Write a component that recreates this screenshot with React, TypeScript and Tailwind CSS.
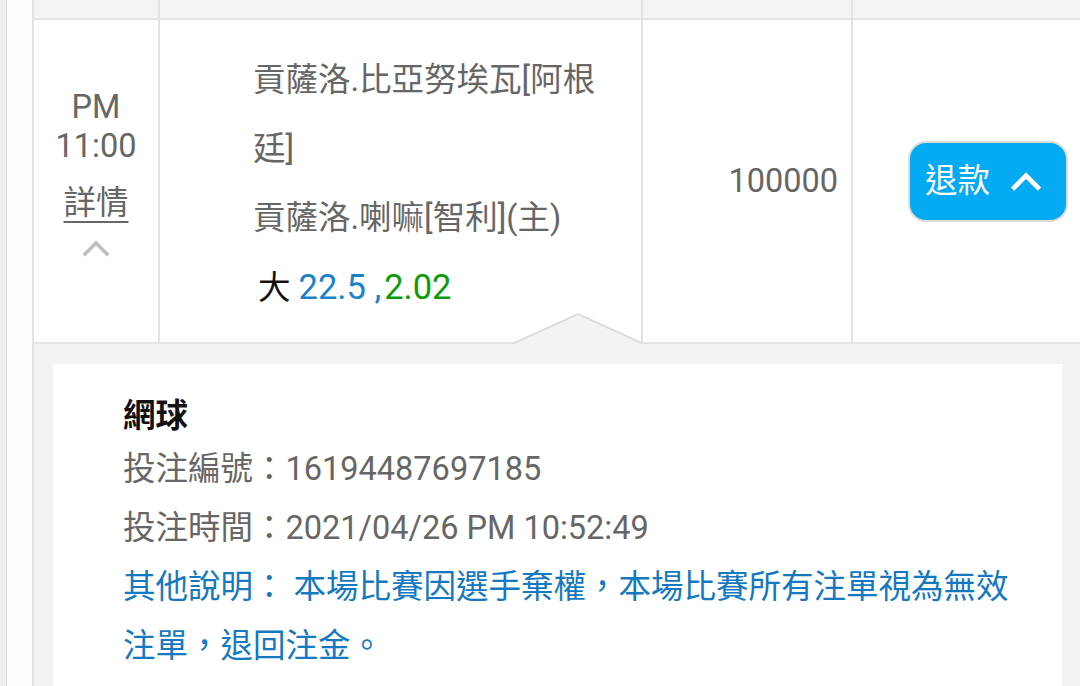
import React from "react";

const cellBorder = "border-r-2 border-[#e3e3e3]";

function ChevronUp({ className, stroke, width }: { className: string; stroke: string; width: number }) {
  return (
    <svg viewBox="0 0 28 18" className={className} fill="none">
      <polyline points="3,15 14,4 25,15" stroke={stroke} strokeWidth={width} strokeLinecap="square" />
    </svg>
  );
}

export default function App() {
  return (
    <div className="flex h-[686px] w-[1080px] overflow-hidden bg-white font-[Roboto,'Noto_Sans_CJK_TC',sans-serif] text-[32.5px] text-[#666666]">
      {/* page edge */}
      <div className="w-[7px] shrink-0 border-r border-[#dadada] bg-[#eeeeee]" />
      <div className="w-[25px] shrink-0 bg-[#fdfdfd]" />

      <div className="flex min-w-0 flex-1 flex-col border-l-2 border-[#e3e3e3]">
        {/* previous row tail */}
        <div className="flex h-[20px] shrink-0 border-b-2 border-[#e3e3e3] bg-[#f4f4f4]">
          <div className={`w-[126px] shrink-0 ${cellBorder}`} />
          <div className={`w-[483px] shrink-0 ${cellBorder}`} />
          <div className={`w-[210px] shrink-0 ${cellBorder}`} />
          <div className="flex-1" />
        </div>

        {/* bet row */}
        <div className="relative flex h-[324px] shrink-0 border-b-2 border-[#e3e3e3]">
          <div className={`flex w-[126px] shrink-0 flex-col items-center pt-[68px] ${cellBorder}`}>
            <span className="leading-[39px]">PM</span>
            <span className="leading-[39px]">11:00</span>
            <span className="mt-[18px] leading-[39px] underline decoration-[2px] underline-offset-[7px]">詳情</span>
            <ChevronUp className="mt-[16px] h-[18px] w-[28px]" stroke="#bdbdbd" width={3.5} />
          </div>

          <div className={`w-[483px] shrink-0 pl-[93px] pt-[26px] ${cellBorder}`}>
            <div className="w-[360px] leading-[69px]">
              <p>貢薩洛.比亞努埃瓦[阿根廷]</p>
              <p>貢薩洛.喇嘛[智利](主)</p>
              <p className="ml-[5px]">
                <span className="text-[#111111]">大 </span>
                <span className="text-[34.5px] text-[#1a82c8]">22.5 ,</span>
                <span className="ml-[3px] text-[34.5px] text-[#0b9b0b]">2.02</span>
              </p>
            </div>
          </div>

          <div className={`flex w-[210px] shrink-0 items-center justify-end pr-[13px] ${cellBorder}`}>
            100000
          </div>

          <div className="flex flex-1 items-center pl-[55px]">
            <button className="flex h-[81px] items-center rounded-[18px] border-2 border-[#dcdcdc] bg-[#04abf2] pl-[15px] pr-[25px] text-white">
              <span className="leading-none">退款</span>
              <ChevronUp className="ml-[21px] h-[20px] w-[30px]" stroke="#ffffff" width={4.5} />
            </button>
          </div>

          {/* pointer notch */}
          <svg
            viewBox="0 0 128 32"
            className="absolute bottom-[-2px] left-[480px] h-[32px] w-[128px]"
          >
            <polygon points="0,32 64,2 128,32" fill="#f3f3f3" />
            <polyline points="0,31 64,2 128,31" fill="none" stroke="#dcdcdc" strokeWidth="2" />
          </svg>
        </div>

        {/* detail panel */}
        <div className="flex-1 bg-[#f3f3f3] pl-[19px] pr-[18px] pt-[20px]">
          <div className="h-full bg-white pl-[70px] pr-[35px] pt-[28px]">
            <p className="font-bold leading-[48px] text-[#111111]">網球</p>
            <p className="leading-[59px]">投注編號：16194487697185</p>
            <p className="leading-[59px]">投注時間：2021/04/26 PM 10:52:49</p>
            <p className="leading-[59px] text-[#1479c0]">其他說明： 本場比賽因選手棄權，本場比賽所有注單視為無效注單，退回注金。</p>
          </div>
        </div>
      </div>
    </div>
  );
}
